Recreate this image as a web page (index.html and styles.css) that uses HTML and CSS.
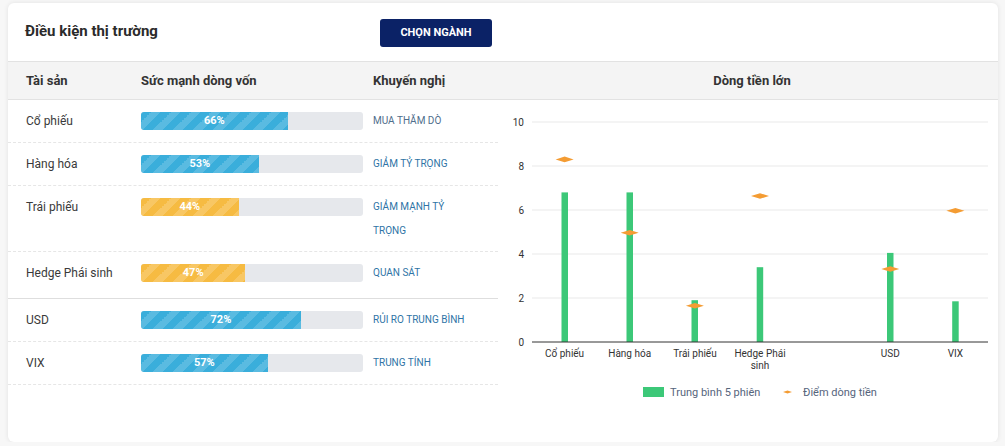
FILE: index.html
```html
<!DOCTYPE html>
<html lang="vi">
<head>
<meta charset="utf-8">
<title>Điều kiện thị trường</title>
<link rel="stylesheet" href="styles.css">
</head>
<body>
<div class="card">
  <div class="card-head">
    <h2 class="title">Điều kiện thị trường</h2>
    <button class="btn">CHỌN NGÀNH</button>
  </div>
  <div class="card-body">
    <section class="market">
      <div class="row thead">
        <div class="c-asset">Tài sản</div>
        <div class="c-bar">Sức mạnh dòng vốn</div>
        <div class="c-head">Khuyến nghị</div>
      </div>
      <div class="row">
        <div class="c-asset">Cổ phiếu</div>
        <div class="c-bar"><div class="track"><div class="fill blue" style="width:66%">66%</div></div></div>
        <div class="c-rec rec-gray">MUA THĂM DÒ</div>
      </div>
      <div class="row">
        <div class="c-asset">Hàng hóa</div>
        <div class="c-bar"><div class="track"><div class="fill blue" style="width:53%">53%</div></div></div>
        <div class="c-rec">GIẢM TỶ TRỌNG</div>
      </div>
      <div class="row">
        <div class="c-asset">Trái phiếu</div>
        <div class="c-bar"><div class="track"><div class="fill orange" style="width:44%">44%</div></div></div>
        <div class="c-rec">GIẢM MẠNH TỶ TRỌNG</div>
      </div>
      <div class="row group-end">
        <div class="c-asset">Hedge Phái sinh</div>
        <div class="c-bar"><div class="track"><div class="fill orange" style="width:47%">47%</div></div></div>
        <div class="c-rec">QUAN SÁT</div>
      </div>
      <div class="row">
        <div class="c-asset">USD</div>
        <div class="c-bar"><div class="track"><div class="fill blue" style="width:72%">72%</div></div></div>
        <div class="c-rec">RỦI RO TRUNG BÌNH</div>
      </div>
      <div class="row">
        <div class="c-asset">VIX</div>
        <div class="c-bar"><div class="track"><div class="fill blue" style="width:57%">57%</div></div></div>
        <div class="c-rec">TRUNG TÍNH</div>
      </div>
    </section>
    <section class="flow">
      <div class="flow-head">Dòng tiền lớn</div>
      <svg class="chart" width="500" height="300" viewBox="0 0 500 300">
        <g class="grid">
          <line x1="34" y1="22" x2="490" y2="22"/>
          <line x1="34" y1="66" x2="490" y2="66"/>
          <line x1="34" y1="110" x2="490" y2="110"/>
          <line x1="34" y1="154" x2="490" y2="154"/>
          <line x1="34" y1="198" x2="490" y2="198"/>
        </g>
        <g class="ylab">
          <text x="26" y="25.5">10</text>
          <text x="26" y="69.5">8</text>
          <text x="26" y="113.5">6</text>
          <text x="26" y="157.5">4</text>
          <text x="26" y="201.5">2</text>
          <text x="26" y="245.5">0</text>
        </g>
        <g class="bars">
          <rect x="63.5" y="92.4" width="6.5" height="149.6"/>
          <rect x="128.5" y="92.4" width="6.5" height="149.6"/>
          <rect x="193.5" y="200.2" width="6.5" height="41.8"/>
          <rect x="258.7" y="167.2" width="6.5" height="74.8"/>
          <rect x="389" y="152.9" width="6.5" height="89.1"/>
          <rect x="454.2" y="201.3" width="6.5" height="40.7"/>
        </g>
        <line class="axis" x1="34" y1="242" x2="490" y2="242"/>
        <g class="marks">
          <polygon points="57.6,59.4 66.6,56.6 75.6,59.4 66.6,62.2"/>
          <polygon points="122.7,132.7 131.7,129.9 140.7,132.7 131.7,135.5"/>
          <polygon points="187.9,205.7 196.9,202.9 205.9,205.7 196.9,208.5"/>
          <polygon points="253,96 262,93.2 271,96 262,98.8"/>
          <polygon points="383.3,169 392.3,166.2 401.3,169 392.3,171.8"/>
          <polygon points="448.4,110.7 457.4,107.9 466.4,110.7 457.4,113.5"/>
        </g>
        <g class="xlab">
          <text x="66.6" y="256.5">Cổ phiếu</text>
          <text x="131.7" y="256.5">Hàng hóa</text>
          <text x="196.9" y="256.5">Trái phiếu</text>
          <text x="262" y="256.5">Hedge Phái</text>
          <text x="262" y="268.5">sinh</text>
          <text x="392.3" y="256.5">USD</text>
          <text x="457.4" y="256.5">VIX</text>
        </g>
        <g class="legend">
          <rect x="145" y="287" width="21" height="10"/>
          <text x="172" y="296">Trung bình 5 phiên</text>
          <polygon class="lg-mark" points="285,292 289.5,290.5 294,292 289.5,293.5"/>
          <text x="305" y="296">Điểm dòng tiền</text>
        </g>
      </svg>
    </section>
  </div>
</div>
</body>
</html>
```

FILE: styles.css
```css
* { box-sizing: border-box; }

html, body {
  margin: 0;
  background: #f7f7f7;
}

body {
  padding: 3px 7px 0 8px;
  font-family: Roboto, "Noto Sans", "Liberation Sans", sans-serif;
  color: #333;
}

.card {
  width: 990px;
  height: 439px;
  background: #fff;
  border-radius: 6px;
  box-shadow: 0 0 5px rgba(0, 0, 0, 0.09);
  overflow: hidden;
}

.card-head {
  height: 59px;
  display: flex;
  align-items: center;
  padding: 0 17px;
  border-bottom: 1px solid #e2e2e2;
}

.title {
  margin: 0;
  flex: 0 0 355px;
  font-size: 15px;
  font-weight: 700;
  color: #2b2b2b;
  position: relative;
  top: -1px;
}

.btn {
  width: 112px;
  height: 28px;
  border: 0;
  border-radius: 3px;
  background: #0b2266;
  color: #fff;
  font-family: Roboto, "Noto Sans", sans-serif;
  font-size: 11px;
  font-weight: 700;
  padding: 0;
  margin-top: 1px;
}

.card-body {
  display: flex;
}

.market {
  flex: 0 0 490px;
  min-width: 0;
}

.flow {
  flex: 0 0 500px;
  min-width: 0;
}

.row {
  display: grid;
  grid-template-columns: 133px 222px 135px;
  padding: 9px 0;
  border-bottom: 1px dashed #e6e6e6;
  font-size: 12px;
  line-height: 24px;
}

.row.thead,
.flow-head {
  height: 38px;
  padding: 0;
  align-items: center;
  background: #f4f4f4;
  border-bottom: 1px solid #e2e2e2;
  font-weight: 700;
  font-size: 13px;
  color: #333;
}

.flow-head {
  display: flex;
  justify-content: center;
  padding-left: 8px;
}

.row.group-end {
  padding-bottom: 13px;
  border-bottom: 1px solid #dedede;
}

.c-asset {
  padding-left: 18px;
  color: #3a3a3a;
}

.thead .c-asset {
  color: #333;
}

.c-head {
  padding-left: 10px;
}

.c-bar {
  display: flex;
  align-items: center;
  height: 24px;
}

.track {
  width: 222px;
  height: 18px;
  border-radius: 3px;
  background: #e6e8ec;
  overflow: hidden;
}

.fill {
  height: 18px;
  color: #fff;
  font-size: 11px;
  font-weight: 700;
  line-height: 18px;
  text-align: center;
  background-size: 20px 20px;
}

.fill.blue {
  background-color: #3aaedb;
  background-image: linear-gradient(-45deg,
    rgba(255,255,255,.16) 25%, transparent 25%,
    transparent 50%, rgba(255,255,255,.16) 50%,
    rgba(255,255,255,.16) 75%, transparent 75%, transparent);
}

.fill.orange {
  background-color: #f6bb42;
  background-image: linear-gradient(-45deg,
    rgba(255,255,255,.18) 25%, transparent 25%,
    transparent 50%, rgba(255,255,255,.18) 50%,
    rgba(255,255,255,.18) 75%, transparent 75%, transparent);
}

.c-rec {
  padding: 0 25px 0 10px;
  font-size: 10px;
  line-height: 23.5px;
  color: #2f74a6;
  text-transform: uppercase;
}

.c-rec.rec-gray {
  color: #4f6e8c;
}

.chart {
  display: block;
}

.grid line {
  stroke: #f0f0f0;
  stroke-width: 1.5;
}

.axis {
  stroke: #333;
  stroke-width: 1;
}

.ylab text {
  font-family: Roboto, "Noto Sans", sans-serif;
  font-size: 10px;
  fill: #333;
  text-anchor: end;
}

.xlab text {
  font-family: Roboto, "Noto Sans", sans-serif;
  font-size: 10px;
  fill: #333;
  text-anchor: middle;
}

.bars rect {
  fill: #3cc878;
}

.marks polygon {
  fill: #f49c33;
}

.legend rect {
  fill: #3cc878;
}

.legend .lg-mark {
  fill: #f49c33;
}

.legend text {
  font-family: Roboto, "Noto Sans", sans-serif;
  font-size: 11px;
  fill: #56657c;
}
```
